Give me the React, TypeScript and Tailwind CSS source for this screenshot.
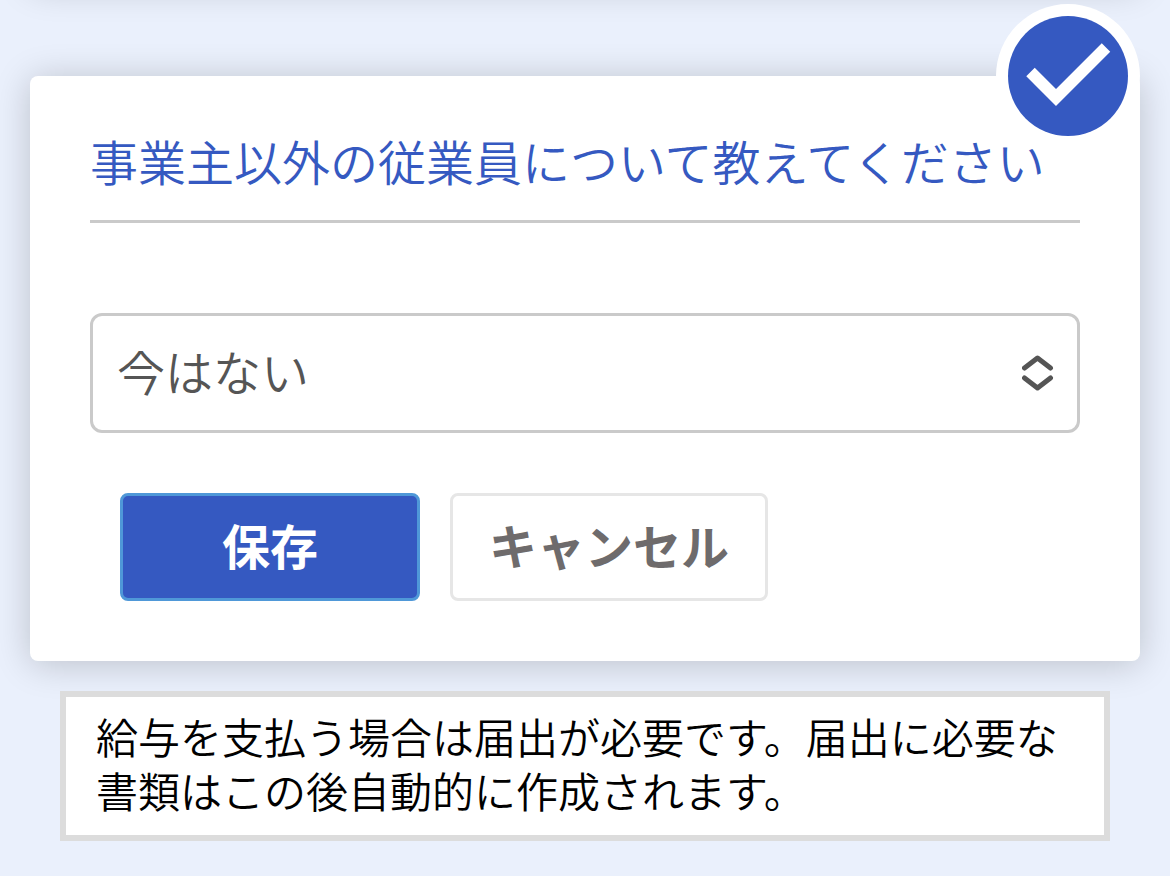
import type { ReactNode } from 'react'

const fontJa = "font-['Liberation_Sans','Noto_Sans_CJK_JP',sans-serif]"

const CheckBadge = () => (
  <div className="absolute -top-[72px] right-0 size-36 rounded-full bg-white p-3">
    <svg viewBox="0 0 120 120" className="size-full" aria-hidden="true">
      <circle cx="60" cy="60" r="60" fill="#3559c1" />
      <path d="M22.5 56 L48 81.5 L98 31.5" fill="none" stroke="#fff" strokeWidth="12" />
    </svg>
  </div>
)

const Card = ({ children }: { children: ReactNode }) => (
  <section className="relative rounded-lg bg-white px-[60px] pt-[57px] pb-[60px] shadow-[0_3px_36px_rgba(0,0,0,0.2)]">
    <CheckBadge />
    {children}
  </section>
)

const EmployeeSelect = () => (
  <div className="relative mt-[90px]">
    <select
      id="employees"
      defaultValue="none"
      className="block h-[120px] w-full appearance-none rounded-xl border-3 border-[#cacaca] bg-white px-6 pt-1 text-5xl font-[350] text-[#555]"
    >
      <option value="none">今はない</option>
    </select>
    <svg
      viewBox="0 0 34 40"
      className="pointer-events-none absolute top-10 right-6 h-10 w-[34px]"
      fill="none"
      stroke="#555"
      strokeWidth="5"
      strokeLinecap="round"
      strokeLinejoin="round"
      aria-hidden="true"
    >
      <path d="M2.5 15 L15.5 5 L28.5 15 M2.5 25 L15.5 35 L28.5 25" />
    </svg>
  </div>
)

const App = () => {
  return (
    <main className={`relative min-h-screen overflow-hidden bg-[#eaf0fc] px-[30px] pt-[76px] pb-9 ${fontJa}`}>
      {/* bottom shadow of the card scrolled off above */}
      <div className="absolute inset-x-[30px] bottom-full mb-4 h-36 rounded-lg shadow-[0_3px_36px_rgba(0,0,0,0.2)]" />
      <Card>
        <label
          htmlFor="employees"
          className="block border-b-3 border-[#cacaca] pb-[23px] text-5xl leading-16 font-[350] whitespace-nowrap text-[#3559c1]"
        >
          事業主以外の従業員について教えてください
        </label>
        <EmployeeSelect />
        <div className="mt-[60px] flex gap-[30px] px-[30px]">
          <button className="h-[108px] w-[300px] rounded-lg border-3 border-[#4f98d8] bg-[#3559c1] pt-1 text-5xl font-bold text-white">
            保存
          </button>
          <button className="h-[108px] w-[318px] rounded-lg border-3 border-[#e6e6e6] bg-white pt-1 text-5xl font-bold whitespace-nowrap text-[#6e6b6c]">
            キャンセル
          </button>
        </div>
      </Card>
      <p className="relative mx-[30px] mt-[30px] border-6 border-[#dcdcdc] bg-white px-[30px] pt-4 pb-[14px] text-[42px] leading-[54px] font-[350] text-black">
        給与を支払う場合は届出が必要です。届出に必要な書類はこの後自動的に作成されます。
      </p>
    </main>
  )
}

export default App
